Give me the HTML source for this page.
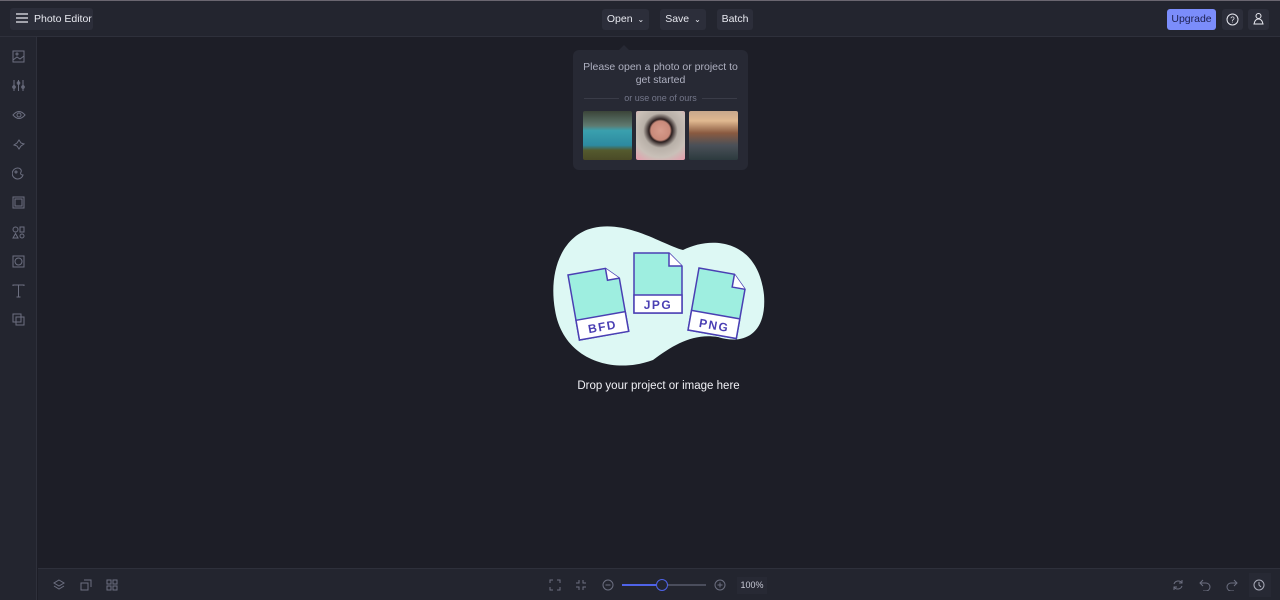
<!DOCTYPE html><html><head><meta charset="utf-8"><style>
*{box-sizing:border-box;margin:0;padding:0}
body{width:1280px;height:600px;background:#1d1e27;font-family:"Liberation Sans",sans-serif;position:relative;overflow:hidden;color:#e6e7ee}
.top{position:absolute;left:0;top:0;width:1280px;height:37px;background:#23252f;border-top:1px solid #6a6670;border-bottom:1px solid #2e303b}
.btn{position:absolute;top:8px;height:21px;background:#2c2e3a;border-radius:3px;font-size:10.5px;line-height:21px;color:#e8e9f0;white-space:nowrap;text-align:center}
.side{position:absolute;left:0;top:37px;width:37px;height:563px;background:#23252f;border-right:1px solid #2e303b}
.side svg{position:absolute;left:12px}
.bot{position:absolute;left:38px;top:568px;width:1242px;height:32px;background:#23252f;border-top:1px solid #2e303b}
.ic{stroke:#6c6f80;fill:none;stroke-width:1}
.pop{position:absolute;left:573px;top:50px;width:175px;height:120px;background:#272934;border-radius:6px}
.pop:before{content:"";position:absolute;left:46px;top:-5px;border:5px solid transparent;border-bottom-color:#272934;border-top:0}
</style></head><body>
<div class="top">
<div class="btn" style="left:10px;width:83px;top:7px;height:22px;padding-left:24px;line-height:22px;text-align:left">Photo Editor</div>
<svg style="position:absolute;left:16px;top:12px" width="12" height="10"><path d="M0 1h12M0 5h12M0 9h12" stroke="#e8e9f0" stroke-width="1.2"/></svg>
<div class="btn" style="left:602px;width:47px">Open <span style="font-size:8px;margin-left:2px">&#8964;</span></div>
<div class="btn" style="left:660px;width:46px">Save <span style="font-size:8px;margin-left:2px">&#8964;</span></div>
<div class="btn" style="left:717px;width:36px">Batch</div>
<div class="btn" style="left:1167px;width:49px;background:#7b8dfb;color:#1d2050">Upgrade</div>
<div class="btn" style="left:1222px;width:21px"></div>
<svg style="position:absolute;left:1226px;top:12px" width="13" height="13"><circle cx="6.5" cy="6.5" r="5.5" stroke="#e8e9f0" fill="none"/><text x="6.5" y="9.5" font-size="8" fill="#e8e9f0" text-anchor="middle" font-family="Liberation Sans">?</text></svg>
<div class="btn" style="left:1248px;width:21px"></div>
<svg style="position:absolute;left:1252px;top:11px" width="13" height="13"><circle cx="6.5" cy="4" r="2.5" stroke="#e8e9f0" fill="none"/><path d="M2 12 Q3 7 6.5 7 Q10 7 11 12Z" stroke="#e8e9f0" fill="none"/></svg>
</div>
<div class="side">
<svg style="top:13px" width="13" height="13" class="ic"><rect x="1" y="1" width="11" height="11"/><path d="M1 10l4-3 3 2 4-3"/><circle cx="5" cy="4" r="1"/></svg>
<svg style="top:42px" width="13" height="13" class="ic"><path d="M2 1v11M6.5 1v11M11 1v11"/><circle cx="2" cy="8" r="1.3"/><circle cx="6.5" cy="4" r="1.3"/><circle cx="11" cy="8" r="1.3"/></svg>
<svg style="top:72px" width="14" height="12" class="ic"><path d="M1 6Q7-1 13 6Q7 13 1 6Z"/><circle cx="7" cy="6" r="2"/></svg>
<svg style="top:101px" width="13" height="13" class="ic"><path d="M7 2l2 3 3 1-3 2-2 3-2-3-3-1 3-2z"/></svg>
<svg style="top:130px" width="13" height="13" class="ic"><path d="M6 1a5.5 5.5 0 1 0 5 7c-2 0-3-1-2-3 1-2-1-4-3-4z"/><circle cx="4" cy="5" r="1"/></svg>
<svg style="top:159px" width="13" height="13" class="ic"><rect x="1" y="1" width="11" height="11"/><rect x="3" y="3" width="7" height="7"/></svg>
<svg style="top:189px" width="13" height="13" class="ic"><circle cx="3.5" cy="3.5" r="2.5"/><rect x="8" y="1" width="4" height="5"/><path d="M3.5 7.5l2.5 4.5h-5z"/><circle cx="10" cy="10" r="2"/></svg>
<svg style="top:218px" width="13" height="13" class="ic"><rect x="1" y="1" width="11" height="11"/><circle cx="6.5" cy="6.5" r="3.5"/></svg>
<svg style="top:247px" width="13" height="14" class="ic"><path d="M1 2V1h11v1M6.5 1v12M4.5 13h4"/></svg>
<svg style="top:276px" width="13" height="13" class="ic"><rect x="1" y="1" width="8" height="8"/><rect x="4" y="4" width="8" height="8"/></svg>
</div>
<div class="pop">
<div style="text-align:center;font-size:10.5px;color:#aeb0c0;line-height:13px;margin-top:11px">Please open a photo or project to<br>get started</div>
<div style="position:relative;margin:5px 11px 0;height:12px;font-size:9px;color:#74778a;text-align:center;line-height:12px"><span style="position:absolute;left:0;top:6px;width:35px;border-top:1px solid #3a3c48"></span>or use one of ours<span style="position:absolute;right:0;top:6px;width:35px;border-top:1px solid #3a3c48"></span></div>
<div style="position:absolute;left:10px;top:61px;width:49px;height:49px;border-radius:2px;background:linear-gradient(#3b4438 0,#5f7a70 30%,#3aa0ae 40%,#2d8aa0 70%,#545a2e 80%,#4a4a26 100%)"></div>
<div style="position:absolute;left:63px;top:61px;width:49px;height:49px;border-radius:2px;background:radial-gradient(circle at 50% 40%,#d79c8c 0,#c98a7a 25%,#2a1e1e 30%,#b8b0a8 45%,#c9c0b8 70%,#e89bac 100%)"></div>
<div style="position:absolute;left:116px;top:61px;width:49px;height:49px;border-radius:2px;background:linear-gradient(#c8a78c 0,#e0b890 20%,#8a5a40 45%,#4a5058 70%,#2c3a3e 100%)"></div>
</div>
<svg style="position:absolute;left:553px;top:225px" width="212" height="143">
<path d="M40 3C75-5 110 20 130 25C160 10 205 15 211 70C214 110 190 120 165 112C140 108 120 120 100 135C60 150 10 135 2 85C-5 45 10 10 40 3Z" fill="#ddf8f4"/>
<g stroke="#4a3fb3" stroke-width="1.5" font-family="Liberation Sans" font-weight="bold" font-size="12" letter-spacing="1.5" text-anchor="middle">
<g transform="translate(15,50) rotate(-10)"><path d="M0 0h38l12 12v54H0z" fill="#9eeee0"/><path d="M0 46h50v20H0z" fill="#fff"/><path d="M38 0v12h12" fill="#fff"/><text x="25" y="61" fill="#4a3fb3" stroke="none">BFD</text></g>
<g transform="translate(81,28)"><path d="M0 0h35l13 13v47H0z" fill="#9eeee0"/><path d="M0 42h48v18H0z" fill="#fff"/><path d="M35 0v13h13" fill="#fff"/><text x="24" y="56" fill="#4a3fb3" stroke="none">JPG</text></g>
<g transform="translate(146,43) rotate(10)"><path d="M0 0h36l13 13v50H0z" fill="#9eeee0"/><path d="M0 43h49v20H0z" fill="#fff"/><path d="M36 0v13h13" fill="#fff"/><text x="25" y="58" fill="#4a3fb3" stroke="none">PNG</text></g>
</g>
</svg>
<div style="position:absolute;left:540px;top:380px;width:237px;text-align:center;font-size:11.5px;color:#f0f0f5">Drop your project or image here</div>
<div class="bot">
<svg style="position:absolute;left:15px;top:10px" width="12" height="12" class="ic"><path d="M6 1l5 3-5 3-5-3z M1 7l5 3 5-3"/></svg>
<svg style="position:absolute;left:42px;top:10px" width="12" height="12" class="ic"><rect x="1" y="4" width="7" height="7"/><path d="M4 1h7v7"/></svg>
<svg style="position:absolute;left:68px;top:10px" width="12" height="12" class="ic"><rect x="1" y="1" width="4" height="4"/><rect x="7" y="1" width="4" height="4"/><rect x="1" y="7" width="4" height="4"/><rect x="7" y="7" width="4" height="4"/></svg>
<svg style="position:absolute;left:511px;top:10px" width="12" height="12" class="ic"><path d="M1 4V1h3M8 1h3v3M11 8v3H8M4 11H1V8"/></svg>
<svg style="position:absolute;left:537px;top:10px" width="12" height="12" class="ic"><path d="M1 4h3V1M8 1v3h3M11 8H8v3M4 11V8H1"/></svg>
<svg style="position:absolute;left:564px;top:10px" width="12" height="12" class="ic"><circle cx="6" cy="6" r="5"/><path d="M3.5 6h5"/></svg>
<div style="position:absolute;left:584px;top:15px;width:40px;height:2px;background:#4f63e8"></div>
<div style="position:absolute;left:624px;top:15px;width:44px;height:2px;background:#4a4d5c"></div>
<div style="position:absolute;left:618px;top:10px;width:12px;height:12px;border-radius:50%;border:1.5px solid #4f63e8;background:#23252f"></div>
<svg style="position:absolute;left:676px;top:10px" width="12" height="12" class="ic"><circle cx="6" cy="6" r="5"/><path d="M3.5 6h5M6 3.5v5"/></svg>
<div style="position:absolute;left:699px;top:8px;width:30px;height:17px;background:#272934;font-size:9px;line-height:17px;text-align:center;color:#c8cad6">100%</div>
<svg style="position:absolute;left:1134px;top:10px" width="12" height="12" class="ic"><path d="M2 5a4.5 4.5 0 0 1 8-1M10 7a4.5 4.5 0 0 1-8 1M10 1v3H7M2 11V8h3"/></svg>
<svg style="position:absolute;left:1161px;top:10px" width="12" height="12" class="ic"><path d="M4 1L1 4l3 3M1 4h6a4 4 0 0 1 0 8H4"/></svg>
<svg style="position:absolute;left:1188px;top:10px" width="12" height="12" class="ic"><path d="M8 1l3 3-3 3M11 4H5a4 4 0 0 0 0 8h3"/></svg>
<div style="position:absolute;left:1211px;top:4px;width:22px;height:24px;background:#272934"></div>
<svg style="position:absolute;left:1215px;top:10px" width="12" height="12"><circle cx="6" cy="6" r="5" stroke="#a8aab8" fill="none"/><path d="M6 3v3l2 2" stroke="#a8aab8" fill="none"/></svg>
</div>
</body></html>
